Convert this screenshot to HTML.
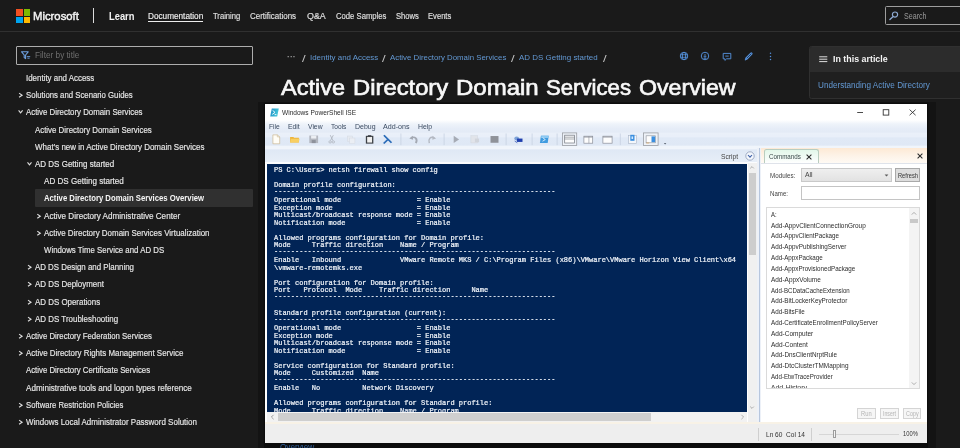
<!DOCTYPE html>
<html lang="en">
<head>
<meta charset="utf-8">
<title>Active Directory Domain Services Overview | Microsoft Learn</title>
<style>
html,body{margin:0;padding:0;}
body{width:960px;height:448px;overflow:hidden;background:#1a1a1a;position:relative;font-family:"Liberation Sans",sans-serif;}
.a{position:absolute;display:block;}
.t{position:absolute;white-space:pre;display:block;transform-origin:0 50%;}
svg{position:absolute;overflow:visible;}
#con{position:absolute;left:267.4px;top:164px;width:480.1px;height:248px;background:#012456;overflow:hidden;}
.c{position:absolute;display:block;left:6.6px;font-family:"Liberation Mono","DejaVu Sans Mono",monospace;font-size:7.01px;line-height:8px;color:#eef2f8;white-space:pre;-webkit-text-stroke:0.22px #eef2f8;}
.d{font-weight:700;-webkit-text-stroke:0;color:#e8eef6;}
</style>
</head>
<body>
<div id="root" style="position:absolute;left:0;top:0;width:960px;height:448px;overflow:hidden;will-change:transform;">
<!-- ===== header ===== -->
<div class="a" style="left:0;top:31px;width:960px;height:1.3px;background:#303030;"></div>
<div class="a" style="left:16px;top:9.2px;width:6.6px;height:6.6px;background:#f25022;"></div>
<div class="a" style="left:23.5px;top:9.2px;width:6.6px;height:6.6px;background:#7fba00;"></div>
<div class="a" style="left:16px;top:16.6px;width:6.6px;height:6.6px;background:#00a4ef;"></div>
<div class="a" style="left:23.5px;top:16.6px;width:6.6px;height:6.6px;background:#ffb900;"></div>
<div class="a" style="left:93.2px;top:8.4px;width:1.1px;height:14.2px;background:#dcdcdc;"></div>
<div class="a" style="left:147.8px;top:21.3px;width:55.2px;height:1px;background:#ececec;"></div>
<!-- search -->
<div class="a" style="left:885px;top:6px;width:90px;height:19px;border:1px solid #9e9e9e;border-radius:1.5px;box-sizing:border-box;"></div>
<svg style="left:889.3px;top:11.2px" width="10" height="10" viewBox="0 0 10 10"><circle cx="6" cy="3.6" r="2.6" fill="none" stroke="#8eaad2" stroke-width="1.2"/><path d="M4.2 5.6 L0.9 8.6" stroke="#8eaad2" stroke-width="1.3" stroke-linecap="round"/></svg>
<!-- filter -->
<div class="a" style="left:16px;top:46px;width:237px;height:19px;border:1px solid #adadad;border-radius:1px;box-sizing:border-box;"></div>
<svg style="left:21px;top:51px" width="10" height="9" viewBox="0 0 10 9"><path d="M0.6 0.8 H7.2 L4.6 4 V7.6 L3.2 6.6 V4 Z" fill="none" stroke="#6ea0e0" stroke-width="1.1" stroke-linejoin="round"/><path d="M5.8 5.6 H9.2 M6.4 7.2 H8.6" stroke="#6ea0e0" stroke-width="0.9"/></svg>

<!-- ===== sidebar ===== -->
<div class="a" style="left:34.6px;top:189.2px;width:218.1px;height:17.6px;background:#303030;border-radius:1px;"></div>
<svg style="left:0;top:0" width="260" height="448" viewBox="0 0 260 448" fill="none" stroke="#dcdcdc" stroke-width="1.15" stroke-linecap="butt" stroke-linejoin="miter">
<path d="M19.1 93.1 L22.1 95.2 L19.1 97.3"/>
<path d="M18.6 110.4 L20.6 112.8 L22.6 110.4"/>
<path d="M27.5 162.4 L29.5 164.8 L31.5 162.4"/>
<path d="M37.3 214.1 L40.3 216.2 L37.3 218.3"/>
<path d="M37.3 231.1 L40.3 233.2 L37.3 235.3"/>
<path d="M28.0 265.1 L31.0 267.2 L28.0 269.3"/>
<path d="M28.0 282.1 L31.0 284.2 L28.0 286.3"/>
<path d="M28.0 300.1 L31.0 302.2 L28.0 304.3"/>
<path d="M28.0 317.1 L31.0 319.2 L28.0 321.3"/>
<path d="M19.1 334.1 L22.1 336.2 L19.1 338.3"/>
<path d="M19.1 351.1 L22.1 353.2 L19.1 355.3"/>
<path d="M19.1 403.1 L22.1 405.2 L19.1 407.3"/>
<path d="M19.1 420.1 L22.1 422.2 L19.1 424.3"/>
</svg>

<!-- ===== action icons ===== -->
<svg style="left:679.2px;top:51.3px" width="10" height="10" viewBox="0 0 10 10" fill="none" stroke="#5490da" stroke-width="0.95"><circle cx="5" cy="5" r="3.75"/><ellipse cx="5" cy="5" rx="1.7" ry="3.75"/><path d="M1.4 3.7 H8.6 M1.4 6.3 H8.6" stroke-width="0.8"/></svg>
<svg style="left:700.3px;top:51.3px" width="10" height="10" viewBox="0 0 10 10" fill="none" stroke="#5490da" stroke-width="0.95"><circle cx="5" cy="5" r="3.75"/><path d="M5 2.9 V6.2 M3.6 4.9 L5 6.4 L6.4 4.9 M3.6 7.3 H6.4" stroke-width="0.85"/></svg>
<svg style="left:721.7px;top:51.6px" width="10" height="10" viewBox="0 0 10 10" fill="none" stroke="#5490da" stroke-width="0.95" stroke-linejoin="round"><path d="M1.2 1.4 H8.8 V6.8 H4.6 L2.9 8.4 V6.8 H1.2 Z"/><path d="M3.3 4.1 H6.7" stroke-width="0.9"/></svg>
<svg style="left:743.6px;top:51.4px" width="10" height="10" viewBox="0 0 10 10" fill="none" stroke-linecap="round"><path d="M2.5 7.5 L7.3 2.7" stroke="#5490da" stroke-width="2.6"/><path d="M3 7 L7 3" stroke="#1f2b3c" stroke-width="0.8"/><path d="M1.3 8.9 L2.2 7.9" stroke="#5490da" stroke-width="1.1"/></svg>
<svg style="left:768.8px;top:52px" width="3" height="9" viewBox="0 0 3 9" fill="#5490da"><circle cx="1.5" cy="1.3" r="0.75"/><circle cx="1.5" cy="4.4" r="0.75"/><circle cx="1.5" cy="7.5" r="0.75"/></svg>

<!-- ===== right rail ===== -->
<div class="a" style="left:809.2px;top:46px;width:160px;height:53px;background:#1f1f1f;border:1px solid #303030;border-radius:2.5px;box-sizing:border-box;overflow:hidden;"><div style="height:25.3px;background:#2c2c2c;"></div></div>
<svg style="left:819.2px;top:56px" width="9" height="7" viewBox="0 0 9 7" stroke="#e8e8e8" stroke-width="0.95"><path d="M0.2 0.8 H8.3 M0.2 3.2 H8.3 M0.2 5.6 H8.3"/></svg>

<!-- ===== PowerShell ISE window ===== -->
<div class="a" style="left:258.4px;top:101.6px;width:677.2px;height:348px;background:#131313;"></div>
<div class="a" style="left:263.6px;top:443px;width:664.4px;height:6px;background:#0c0c0c;"></div>
<div class="a" style="left:264.7px;top:103.7px;width:661.9px;height:339.4px;background:#ffffff;box-shadow:0 0 0 1.2px #0c0c0c;"></div>
<!-- ps icon -->
<svg style="left:270px;top:108px" width="9" height="9" viewBox="0 0 9 9"><defs><linearGradient id="psg" x1="0" y1="0" x2="1" y2="0.3"><stop offset="0" stop-color="#1c8cc6"/><stop offset="1" stop-color="#45c6d8"/></linearGradient></defs><path d="M1.8 0.4 H8.8 L7.2 8.4 H0.2 Z" fill="url(#psg)"/><path d="M2.6 2.4 L5 4.4 L2.2 6.4 M4.6 6.6 H6.4" fill="none" stroke="#fff" stroke-width="0.9"/></svg>
<!-- window controls -->
<svg style="left:850px;top:106px" width="70" height="12" viewBox="0 0 70 12" fill="none" stroke="#2a2a2a" stroke-width="0.85"><path d="M7.2 6.5 H13"/><rect x="33.2" y="3.7" width="5.6" height="5.4"/><path d="M59.6 3.6 L65.6 9.2 M65.6 3.6 L59.6 9.2"/></svg>
<!-- menu / toolbar bands -->
<div class="a" style="left:264.7px;top:120px;width:661.9px;height:43.3px;background:linear-gradient(to bottom,#ffffff 0px,#eef3fa 4px,#e5ecf7 9px,#e4ebf6 12px,#eaf0f9 13.5px,#e9eff9 16.5px,#e0e9f6 18px,#dfe8f5 25px,#f0f5fb 26.5px,#f1f5fb 28.5px,#dfe8f5 30px,#e8eff8 43.3px);"></div>
<div class="a" style="left:264.7px;top:161.8px;width:492.4px;height:2.4px;background:#fbfcfe;"></div>
<!-- commands tab strip (cream) -->
<div class="a" style="left:761.2px;top:148px;width:165.7px;height:15.3px;background:linear-gradient(to bottom,#fde9d4 0,#fdf3e8 8px,#fffaf4 15px);"></div>
<div class="a" style="left:761.2px;top:162.6px;width:165.7px;height:0.9px;background:#dfe3ea;"></div>
<!-- toolbar icons -->
<svg style="left:264.7px;top:131px" width="420" height="17" viewBox="264.7 131 420 17">
<g transform="translate(0 139.4) scale(1 0.84) translate(0 -139.6)">
<!-- new -->
<path d="M272.6 134.2 H277 L279.4 136.6 V144.8 H272.6 Z" fill="#fffdf6" stroke="#c9b48c" stroke-width="0.7"/><path d="M277 134.2 V136.6 H279.4" fill="none" stroke="#c9b48c" stroke-width="0.6"/>
<!-- open -->
<path d="M289.8 136.6 H293 L293.9 137.6 H298.6 V143.4 H289.8 Z" fill="#eeb53c"/><path d="M290.6 138.8 H299.4 L298.3 143.4 H289.8 Z" fill="#f8cf62"/>
<!-- save (disabled) -->
<rect x="309" y="135" width="8.8" height="9" fill="#b3b7c0"/><rect x="310.8" y="135" width="5.2" height="3.6" fill="#eceff4"/><rect x="311.4" y="140.4" width="4" height="3.6" fill="#8e929c"/>
<!-- cut (disabled) -->
<path d="M330 134.6 L332.6 141 M333 134.6 L330.2 141" stroke="#adb2bc" stroke-width="0.9" fill="none"/><circle cx="329.8" cy="142.6" r="1.3" fill="none" stroke="#adb2bc" stroke-width="0.8"/><circle cx="333" cy="142.6" r="1.3" fill="none" stroke="#adb2bc" stroke-width="0.8"/>
<!-- copy (disabled) -->
<rect x="347" y="135.6" width="5.2" height="6.4" fill="#e6eaf1" stroke="#d6dbe4" stroke-width="0.6"/><rect x="349.4" y="138" width="5.2" height="6.4" fill="#eaeef4" stroke="#d6dbe4" stroke-width="0.6"/>
<!-- paste -->
<rect x="366.2" y="136" width="6.2" height="8" fill="#f1f1f1" stroke="#3c4046" stroke-width="1.3"/><rect x="367.6" y="134.6" width="3.4" height="2.2" fill="#3c4046"/>
<!-- clear console (ps) -->
<path d="M383.6 134.8 L391.2 143.6 M387.6 139.6 L383.4 144.4" fill="none" stroke="#2b6cb8" stroke-width="1.8"/>
<!-- sep -->
<path d="M400.6 132.6 V146.4 M443.8 132.6 V146.4 M505.8 132.6 V146.4 M531.8 132.6 V146.4 M556.8 132.6 V146.4 M620 132.6 V146.4" stroke="#c3cede" stroke-width="0.8"/>
<!-- undo / redo -->
<path d="M415.6 144 C417.6 139 415 135.8 410.6 137.6" fill="none" stroke="#a4a9b3" stroke-width="1.9"/><path d="M409 138.4 L412.6 135.4 L412.8 140 Z" fill="#a4a9b3"/>
<path d="M429 144 C427.6 139 430 135.8 434 137.6" fill="none" stroke="#b4b9c3" stroke-width="1.5"/><path d="M435.8 138.4 L432.2 135.4 L432 140 Z" fill="#b4b9c3"/>
<!-- run / run sel / stop -->
<path d="M453.4 135.4 L458.8 139.6 L453.4 143.8 Z" fill="#a6abb5"/>
<rect x="470.6" y="135.2" width="6.4" height="8.6" fill="#e1e4ea" stroke="#cfd4dc" stroke-width="0.5"/><rect x="474.6" y="138.6" width="4.2" height="4.4" fill="#d1d5dc"/>
<rect x="490.2" y="135.6" width="8" height="8" fill="#8f9299"/>
<!-- remote -->
<circle cx="516.4" cy="138.4" r="2.4" fill="#7ea3d8"/><rect x="516.6" y="138.6" width="5.6" height="4" fill="#1f3fae"/><path d="M514.4 141.6 L517 143.6" stroke="#3050b0" stroke-width="0.8"/>
<!-- ps remote -->
<path d="M540.6 135.2 H548.4 L547.4 144 H539.6 Z" fill="#3f9be0"/><path d="M541 135.2 H548.4 L548 138 H540.8 Z" fill="#8cc8f2"/><path d="M542.4 137.6 L545 139.8 L542.2 141.8" fill="none" stroke="#fff" stroke-width="0.8"/>
</g>
<!-- layout 1 (selected) -->
<rect x="562.2" y="132.9" width="14.2" height="12.6" fill="#eef2f8" stroke="#9a9da3" stroke-width="0.8"/>
<rect x="564.4" y="135.2" width="9.8" height="7.8" fill="#fdfdfd" stroke="#70757e" stroke-width="0.7"/><path d="M564.4 137.2 H574.2 M564.4 139 H574.2" stroke="#70757e" stroke-width="0.6"/>
<!-- layout 2 -->
<rect x="583.6" y="136.2" width="8.8" height="7" fill="#fdfdfd" stroke="#8a8f99" stroke-width="0.7"/><path d="M588.6 136.2 V143.2" stroke="#8a8f99" stroke-width="0.6"/><path d="M583.6 137 H592.4" stroke="#8a8f99" stroke-width="0.9"/>
<!-- layout 3 -->
<rect x="602.6" y="136.2" width="9.2" height="7" fill="#fdfdfd" stroke="#8a8f99" stroke-width="0.7"/><path d="M602.6 137 H611.8" stroke="#8a8f99" stroke-width="0.9"/>
<!-- show command -->
<rect x="628.2" y="135.6" width="8" height="8" fill="#f4f7fb" stroke="#a9b4c6" stroke-width="0.6"/><rect x="630" y="134.8" width="4.2" height="6" fill="#3b8fe0"/><rect x="631.2" y="136.4" width="1.6" height="2.6" fill="#d5ebff"/>
<!-- show addon (selected) -->
<rect x="643.2" y="132.9" width="14.6" height="12.6" fill="#eef2f8" stroke="#9a9da3" stroke-width="0.8"/>
<rect x="645.8" y="135.8" width="9.4" height="7" fill="#fdfdfd" stroke="#8a8f99" stroke-width="0.6"/><rect x="651.2" y="136.4" width="3.6" height="5.8" fill="#3b8fe0"/><path d="M646 143 H649" stroke="#e0a050" stroke-width="0.7"/>
<path d="M663.6 143 H666 L664.8 144.6 Z" fill="#5a6270"/>
</svg>
<!-- script toggle button -->
<svg style="left:744.6px;top:151.2px" width="10" height="10" viewBox="0 0 10 10"><circle cx="5" cy="5" r="4.2" fill="#f4f7fc" stroke="#8e9cb8" stroke-width="0.8"/><path d="M3 4 L5 6.2 L7 4" fill="none" stroke="#3b5fa8" stroke-width="1.1"/></svg>
<!-- console -->
<div id="con">
<span class="c" style="top:2px">PS C:\Users&gt; netsh firewall show config</span>
<span class="c" style="top:17px">Domain profile configuration:</span>
<span class="c d" style="top:23px">-------------------------------------------------------------------</span>
<span class="c" style="top:32px">Operational mode                  = Enable</span>
<span class="c" style="top:40px">Exception mode                    = Enable</span>
<span class="c" style="top:47px">Multicast/broadcast response mode = Enable</span>
<span class="c" style="top:55px">Notification mode                 = Enable</span>
<span class="c" style="top:70px">Allowed programs configuration for Domain profile:</span>
<span class="c" style="top:77px">Mode     Traffic direction    Name / Program</span>
<span class="c d" style="top:83px">-------------------------------------------------------------------</span>
<span class="c" style="top:92px">Enable   Inbound              VMware Remote MKS / C:\Program Files (x86)\VMware\VMware Horizon View Client\x64</span>
<span class="c" style="top:100px">\vmware-remotemks.exe</span>
<span class="c" style="top:115px">Port configuration for Domain profile:</span>
<span class="c" style="top:122px">Port   Protocol  Mode    Traffic direction     Name</span>
<span class="c d" style="top:128px">-------------------------------------------------------------------</span>
<span class="c" style="top:145px">Standard profile configuration (current):</span>
<span class="c d" style="top:151px">-------------------------------------------------------------------</span>
<span class="c" style="top:160px">Operational mode                  = Enable</span>
<span class="c" style="top:168px">Exception mode                    = Enable</span>
<span class="c" style="top:175px">Multicast/broadcast response mode = Enable</span>
<span class="c" style="top:183px">Notification mode                 = Enable</span>
<span class="c" style="top:198px">Service configuration for Standard profile:</span>
<span class="c" style="top:205px">Mode     Customized  Name</span>
<span class="c d" style="top:211px">-------------------------------------------------------------------</span>
<span class="c" style="top:220px">Enable   No          Network Discovery</span>
<span class="c" style="top:235px">Allowed programs configuration for Standard profile:</span>
<span class="c" style="top:243px">Mode     Traffic direction    Name / Program</span>
</div>
<!-- console v-scrollbar -->
<div class="a" style="left:747.5px;top:163.3px;width:9.6px;height:259px;background:#f0f0f0;"></div>
<div class="a" style="left:749.2px;top:172.6px;width:6.4px;height:82.6px;background:#cdcdcd;"></div>
<svg style="left:749.4px;top:165px" width="6" height="5" viewBox="0 0 6 5" fill="none" stroke="#9a9a9a" stroke-width="0.8"><path d="M1.2 3.4 L3 1.6 L4.8 3.4"/></svg>
<svg style="left:749.4px;top:404.6px" width="6" height="5" viewBox="0 0 6 5" fill="none" stroke="#9a9a9a" stroke-width="0.8"><path d="M1.2 1.6 L3 3.4 L4.8 1.6"/></svg>
<!-- console h-scrollbar -->
<div class="a" style="left:267.4px;top:412px;width:480.1px;height:10.3px;background:#f2f2f2;"></div>
<div class="a" style="left:277.6px;top:413px;width:373px;height:8.4px;background:#cfcfcf;"></div>
<svg style="left:269.6px;top:414.4px" width="5" height="6" viewBox="0 0 5 6" fill="none" stroke="#8a8a8a" stroke-width="0.8"><path d="M3.6 0.8 L1.4 3 L3.6 5.2"/></svg>
<svg style="left:740px;top:414.4px" width="5" height="6" viewBox="0 0 5 6" fill="none" stroke="#a0a0a0" stroke-width="0.8"><path d="M1.4 0.8 L3.6 3 L1.4 5.2"/></svg>
<!-- splitter -->
<div class="a" style="left:757.1px;top:148px;width:4.1px;height:274.4px;background:#edf1f8;"></div>
<div class="a" style="left:759.2px;top:148px;width:1.1px;height:274.4px;background:#b7c6dd;"></div>
<!-- commands tab -->
<div class="a" style="left:764.4px;top:149.4px;width:54.6px;height:14px;background:linear-gradient(to bottom,#e3f7ea,#f3fbf6 60%,#ffffff);border:0.8px solid #b9cdbf;border-bottom:none;border-radius:2.5px 2.5px 0 0;box-sizing:border-box;"></div>
<svg style="left:805.6px;top:154.2px" width="6" height="6" viewBox="0 0 6 6" fill="none" stroke="#2c2c2c" stroke-width="1.05"><path d="M0.6 0.6 L5.4 5.4 M5.4 0.6 L0.6 5.4"/></svg>
<svg style="left:917.2px;top:153.2px" width="6" height="6" viewBox="0 0 6 6" fill="none" stroke="#2c2c2c" stroke-width="1.05"><path d="M0.6 0.6 L5.4 5.4 M5.4 0.6 L0.6 5.4"/></svg>
<!-- modules combo / refresh / name -->
<div class="a" style="left:801.2px;top:168.2px;width:90.6px;height:14.2px;background:linear-gradient(to bottom,#efefef,#e2e2e2);border:0.8px solid #c9c9c9;box-sizing:border-box;"></div>
<svg style="left:884px;top:174px" width="5" height="3" viewBox="0 0 5 3"><path d="M0.6 0.4 H4.4 L2.5 2.6 Z" fill="#5a5a5a"/></svg>
<div class="a" style="left:895.2px;top:168.2px;width:24.8px;height:14.2px;background:#dddddd;border:0.8px solid #a9a9a9;box-sizing:border-box;"></div>
<div class="a" style="left:801.2px;top:186.4px;width:118.8px;height:14px;background:#fff;border:0.8px solid #c4c4c4;box-sizing:border-box;"></div>
<!-- list box -->
<div class="a" style="left:766.2px;top:207.3px;width:153.8px;height:182px;background:#fff;border:0.8px solid #dadada;box-sizing:border-box;"></div>
<div class="a" style="left:908.8px;top:208.2px;width:10.4px;height:180.2px;background:#f4f4f4;"></div>
<div class="a" style="left:909.8px;top:218.6px;width:8.6px;height:4.6px;background:#c9c9c9;"></div>
<svg style="left:911px;top:211px" width="6" height="5" viewBox="0 0 6 5" fill="none" stroke="#9a9a9a" stroke-width="0.8"><path d="M0.8 3.6 L3 1.4 L5.2 3.6"/></svg>
<svg style="left:911px;top:381.4px" width="6" height="5" viewBox="0 0 6 5" fill="none" stroke="#9a9a9a" stroke-width="0.8"><path d="M0.8 1.4 L3 3.6 L5.2 1.4"/></svg>
<!-- cut-off last list item -->
<div class="a" style="left:767px;top:381.8px;width:140px;height:6.6px;overflow:hidden;"><span style="position:absolute;left:3.75px;top:1.2px;font-size:7.2px;line-height:9px;color:#3c3c3c;white-space:pre;letter-spacing:-0.12px;">Add-History</span></div>
<!-- run/insert/copy -->
<div class="a" style="left:856.5px;top:408px;width:19px;height:11.2px;background:#f6f6f6;border:0.8px solid #d4d4d4;box-sizing:border-box;"></div>
<div class="a" style="left:879.6px;top:408px;width:19.2px;height:11.2px;background:#f6f6f6;border:0.8px solid #d4d4d4;box-sizing:border-box;"></div>
<div class="a" style="left:902.6px;top:408px;width:18.8px;height:11.2px;background:#f6f6f6;border:0.8px solid #d4d4d4;box-sizing:border-box;"></div>
<!-- band under scrollbar + status bar -->
<div class="a" style="left:264.7px;top:422.2px;width:661.9px;height:2.4px;background:#f8f2e6;"></div>
<div class="a" style="left:264.7px;top:424.4px;width:661.9px;height:18.6px;background:#eeeeee;"></div>
<div class="a" style="left:757.6px;top:427.6px;width:0.8px;height:13px;background:#cfcfcf;"></div>
<div class="a" style="left:810.8px;top:427.6px;width:0.8px;height:13px;background:#cfcfcf;"></div>
<div class="a" style="left:818.8px;top:433.8px;width:80px;height:0.9px;background:#d6d6d6;"></div>
<div class="a" style="left:832.8px;top:429.8px;width:3.6px;height:8.6px;background:#f4f4f4;border:0.8px solid #9c9c9c;box-sizing:border-box;"></div>
<!-- peeking link text under the window -->
<div class="a" style="left:279px;top:444.4px;width:40px;height:4px;overflow:hidden;"><span style="position:absolute;left:1px;top:-1.2px;font-size:8.2px;line-height:10px;color:#2f5f9c;white-space:pre;">Overview</span></div>

<!-- ===== all text ===== -->
<span class="t" style="left:33.30px;top:10px;font-size:11.2px;line-height:12px;font-weight:400;color:#f4f4f4;transform:scaleX(1.0112);-webkit-text-stroke:0.42px #f4f4f4;">Microsoft</span>
<span class="t" style="left:108.50px;top:11px;font-size:10.4px;line-height:11px;font-weight:700;color:#f4f4f4;transform:scaleX(0.8976);">Learn</span>
<span class="t" style="left:147.80px;top:11px;font-size:8.3px;line-height:10px;font-weight:400;color:#f0f0f0;transform:scaleX(0.9890);-webkit-text-stroke:0.14px #f0f0f0;">Documentation</span>
<span class="t" style="left:212.80px;top:11px;font-size:8.3px;line-height:10px;font-weight:400;color:#e0e0e0;transform:scaleX(0.9167);-webkit-text-stroke:0.14px #e0e0e0;">Training</span>
<span class="t" style="left:249.70px;top:11px;font-size:8.3px;line-height:10px;font-weight:400;color:#e0e0e0;transform:scaleX(0.9610);-webkit-text-stroke:0.14px #e0e0e0;">Certifications</span>
<span class="t" style="left:307.00px;top:11px;font-size:8.3px;line-height:10px;font-weight:400;color:#e0e0e0;transform:scaleX(1.0724);-webkit-text-stroke:0.14px #e0e0e0;">Q&amp;A</span>
<span class="t" style="left:336.30px;top:11px;font-size:8.3px;line-height:10px;font-weight:400;color:#e0e0e0;transform:scaleX(0.9261);-webkit-text-stroke:0.14px #e0e0e0;">Code Samples</span>
<span class="t" style="left:395.80px;top:11px;font-size:8.3px;line-height:10px;font-weight:400;color:#e0e0e0;transform:scaleX(0.9194);-webkit-text-stroke:0.14px #e0e0e0;">Shows</span>
<span class="t" style="left:428.00px;top:11px;font-size:8.3px;line-height:10px;font-weight:400;color:#e0e0e0;transform:scaleX(0.9182);-webkit-text-stroke:0.14px #e0e0e0;">Events</span>
<span class="t" style="left:904.40px;top:11px;font-size:8.6px;line-height:10px;font-weight:400;color:#9a9a9a;transform:scaleX(0.8262);">Search</span>
<span class="t" style="left:34.80px;top:50px;font-size:8.6px;line-height:10px;font-weight:400;color:#6f6f6f;transform:scaleX(0.9584);">Filter by title</span>
<span class="t" style="left:25.90px;top:73px;font-size:8.3px;line-height:10px;font-weight:400;color:#e6e6e6;transform:scaleX(0.9552);-webkit-text-stroke:0.16px #e6e6e6;">Identity and Access</span>
<span class="t" style="left:25.90px;top:90px;font-size:8.3px;line-height:10px;font-weight:400;color:#e6e6e6;transform:scaleX(0.9365);-webkit-text-stroke:0.16px #e6e6e6;">Solutions and Scenario Guides</span>
<span class="t" style="left:25.90px;top:107px;font-size:8.3px;line-height:10px;font-weight:400;color:#e6e6e6;transform:scaleX(0.9463);-webkit-text-stroke:0.16px #e6e6e6;">Active Directory Domain Services</span>
<span class="t" style="left:34.80px;top:125px;font-size:8.3px;line-height:10px;font-weight:400;color:#e6e6e6;transform:scaleX(0.9487);-webkit-text-stroke:0.16px #e6e6e6;">Active Directory Domain Services</span>
<span class="t" style="left:34.80px;top:142px;font-size:8.3px;line-height:10px;font-weight:400;color:#e6e6e6;transform:scaleX(0.9600);-webkit-text-stroke:0.16px #e6e6e6;">What’s new in Active Directory Domain Services</span>
<span class="t" style="left:34.80px;top:159px;font-size:8.3px;line-height:10px;font-weight:400;color:#e6e6e6;transform:scaleX(0.9648);-webkit-text-stroke:0.16px #e6e6e6;">AD DS Getting started</span>
<span class="t" style="left:44.10px;top:176px;font-size:8.3px;line-height:10px;font-weight:400;color:#e6e6e6;transform:scaleX(0.9721);-webkit-text-stroke:0.16px #e6e6e6;">AD DS Getting started</span>
<span class="t" style="left:44.10px;top:193px;font-size:8.3px;line-height:10px;font-weight:700;color:#f6f6f6;transform:scaleX(0.9307);">Active Directory Domain Services Overview</span>
<span class="t" style="left:44.10px;top:211px;font-size:8.3px;line-height:10px;font-weight:400;color:#e6e6e6;transform:scaleX(0.9774);-webkit-text-stroke:0.16px #e6e6e6;">Active Directory Administrative Center</span>
<span class="t" style="left:44.10px;top:228px;font-size:8.3px;line-height:10px;font-weight:400;color:#e6e6e6;transform:scaleX(0.9579);-webkit-text-stroke:0.16px #e6e6e6;">Active Directory Domain Services Virtualization</span>
<span class="t" style="left:44.10px;top:245px;font-size:8.3px;line-height:10px;font-weight:400;color:#e6e6e6;transform:scaleX(0.9437);-webkit-text-stroke:0.16px #e6e6e6;">Windows Time Service and AD DS</span>
<span class="t" style="left:34.80px;top:262px;font-size:8.3px;line-height:10px;font-weight:400;color:#e6e6e6;transform:scaleX(0.9488);-webkit-text-stroke:0.16px #e6e6e6;">AD DS Design and Planning</span>
<span class="t" style="left:34.80px;top:279px;font-size:8.3px;line-height:10px;font-weight:400;color:#e6e6e6;transform:scaleX(0.9578);-webkit-text-stroke:0.16px #e6e6e6;">AD DS Deployment</span>
<span class="t" style="left:34.80px;top:297px;font-size:8.3px;line-height:10px;font-weight:400;color:#e6e6e6;transform:scaleX(0.9538);-webkit-text-stroke:0.16px #e6e6e6;">AD DS Operations</span>
<span class="t" style="left:34.80px;top:314px;font-size:8.3px;line-height:10px;font-weight:400;color:#e6e6e6;transform:scaleX(0.9583);-webkit-text-stroke:0.16px #e6e6e6;">AD DS Troubleshooting</span>
<span class="t" style="left:25.90px;top:331px;font-size:8.3px;line-height:10px;font-weight:400;color:#e6e6e6;transform:scaleX(0.9390);-webkit-text-stroke:0.16px #e6e6e6;">Active Directory Federation Services</span>
<span class="t" style="left:25.90px;top:348px;font-size:8.3px;line-height:10px;font-weight:400;color:#e6e6e6;transform:scaleX(0.9555);-webkit-text-stroke:0.16px #e6e6e6;">Active Directory Rights Management Service</span>
<span class="t" style="left:25.90px;top:365px;font-size:8.3px;line-height:10px;font-weight:400;color:#e6e6e6;transform:scaleX(0.9410);-webkit-text-stroke:0.16px #e6e6e6;">Active Directory Certificate Services</span>
<span class="t" style="left:25.90px;top:383px;font-size:8.3px;line-height:10px;font-weight:400;color:#e6e6e6;transform:scaleX(0.9742);-webkit-text-stroke:0.16px #e6e6e6;">Administrative tools and logon types reference</span>
<span class="t" style="left:25.90px;top:400px;font-size:8.3px;line-height:10px;font-weight:400;color:#e6e6e6;transform:scaleX(0.9264);-webkit-text-stroke:0.16px #e6e6e6;">Software Restriction Policies</span>
<span class="t" style="left:25.90px;top:417px;font-size:8.3px;line-height:10px;font-weight:400;color:#e6e6e6;transform:scaleX(0.9631);-webkit-text-stroke:0.16px #e6e6e6;">Windows Local Administrator Password Solution</span>
<span class="t" style="left:286.70px;top:52px;font-size:9px;line-height:10px;font-weight:700;color:#9a9a9a;transform:scaleX(0.9667);">···</span>
<span class="t" style="left:301.80px;top:53px;font-size:9.6px;line-height:11px;font-weight:400;color:#c4c4c4;transform:scaleX(1.3474);">/</span>
<span class="t" style="left:310.00px;top:53px;font-size:8.1px;line-height:9px;font-weight:400;color:#6399d4;transform:scaleX(0.9792);">Identity and Access</span>
<span class="t" style="left:382.20px;top:53px;font-size:9.6px;line-height:11px;font-weight:400;color:#c4c4c4;transform:scaleX(1.3474);">/</span>
<span class="t" style="left:390.20px;top:53px;font-size:8.1px;line-height:9px;font-weight:400;color:#6399d4;transform:scaleX(0.9684);">Active Directory Domain Services</span>
<span class="t" style="left:511.20px;top:53px;font-size:9.6px;line-height:11px;font-weight:400;color:#c4c4c4;transform:scaleX(1.3474);">/</span>
<span class="t" style="left:519.00px;top:53px;font-size:8.1px;line-height:9px;font-weight:400;color:#6399d4;transform:scaleX(0.9828);">AD DS Getting started</span>
<span class="t" style="left:603.00px;top:53px;font-size:9.6px;line-height:11px;font-weight:400;color:#c4c4c4;transform:scaleX(1.3474);">/</span>
<span class="t" style="left:281.00px;top:76px;font-size:21.3px;line-height:24px;font-weight:400;color:#f8f8f8;transform:scaleX(1.1034);-webkit-text-stroke:0.64px #f8f8f8;">Active</span>
<span class="t" style="left:353.00px;top:76px;font-size:21.3px;line-height:24px;font-weight:400;color:#f8f8f8;transform:scaleX(1.1173);-webkit-text-stroke:0.64px #f8f8f8;">Directory</span>
<span class="t" style="left:456.00px;top:76px;font-size:21.3px;line-height:24px;font-weight:400;color:#f8f8f8;transform:scaleX(1.1268);-webkit-text-stroke:0.64px #f8f8f8;">Domain</span>
<span class="t" style="left:546.10px;top:76px;font-size:21.3px;line-height:24px;font-weight:400;color:#f8f8f8;transform:scaleX(1.0407);-webkit-text-stroke:0.64px #f8f8f8;">Services</span>
<span class="t" style="left:638.60px;top:76px;font-size:21.3px;line-height:24px;font-weight:400;color:#f8f8f8;transform:scaleX(1.0883);-webkit-text-stroke:0.64px #f8f8f8;">Overview</span>
<span class="t" style="left:832.80px;top:53px;font-size:9.4px;line-height:11px;font-weight:700;color:#f4f4f4;transform:scaleX(0.9457);">In this article</span>
<span class="t" style="left:818.30px;top:80px;font-size:8.3px;line-height:10px;font-weight:400;color:#6399d4;transform:scaleX(0.9806);">Understanding Active Directory</span>
<span class="t" style="left:282.20px;top:108px;font-size:8.1px;line-height:9px;font-weight:400;color:#2a2a2a;transform:scaleX(0.8114);">Windows PowerShell ISE</span>
<span class="t" style="left:268.70px;top:122px;font-size:7.4px;line-height:9px;font-weight:400;color:#3a4a60;transform:scaleX(0.9059);">File</span>
<span class="t" style="left:287.50px;top:122px;font-size:7.4px;line-height:9px;font-weight:400;color:#3a4a60;transform:scaleX(0.9176);">Edit</span>
<span class="t" style="left:307.50px;top:122px;font-size:7.4px;line-height:9px;font-weight:400;color:#3a4a60;transform:scaleX(0.9125);">View</span>
<span class="t" style="left:330.80px;top:122px;font-size:7.4px;line-height:9px;font-weight:400;color:#3a4a60;transform:scaleX(0.8919);">Tools</span>
<span class="t" style="left:354.50px;top:122px;font-size:7.4px;line-height:9px;font-weight:400;color:#3a4a60;transform:scaleX(0.9412);">Debug</span>
<span class="t" style="left:383.00px;top:122px;font-size:7.4px;line-height:9px;font-weight:400;color:#3a4a60;transform:scaleX(0.9625);">Add-ons</span>
<span class="t" style="left:417.80px;top:122px;font-size:7.4px;line-height:9px;font-weight:400;color:#3a4a60;transform:scaleX(0.9340);">Help</span>
<span class="t" style="left:720.90px;top:152px;font-size:7.4px;line-height:9px;font-weight:400;color:#444;transform:scaleX(0.9045);">Script</span>
<span class="t" style="left:769.20px;top:152px;font-size:7.2px;line-height:9px;font-weight:400;color:#3a4a4a;transform:scaleX(0.8680);">Commands</span>
<span class="t" style="left:769.50px;top:171px;font-size:7.3px;line-height:9px;font-weight:400;color:#444;transform:scaleX(0.8545);">Modules:</span>
<span class="t" style="left:805.00px;top:170px;font-size:7.3px;line-height:9px;font-weight:400;color:#444;transform:scaleX(0.9372);">All</span>
<span class="t" style="left:897.60px;top:172px;font-size:7.0px;line-height:7px;font-weight:400;color:#333;transform:scaleX(0.8158);">Refresh</span>
<span class="t" style="left:769.50px;top:189px;font-size:7.3px;line-height:9px;font-weight:400;color:#444;transform:scaleX(0.8372);">Name:</span>
<span class="t" style="left:770.75px;top:210px;font-size:7.2px;line-height:9px;font-weight:400;color:#2c2c2c;transform:scaleX(0.8239);">A:</span>
<span class="t" style="left:770.75px;top:221px;font-size:7.2px;line-height:9px;font-weight:400;color:#2c2c2c;transform:scaleX(0.8915);">Add-AppvClientConnectionGroup</span>
<span class="t" style="left:770.75px;top:231px;font-size:7.2px;line-height:9px;font-weight:400;color:#2c2c2c;transform:scaleX(0.8727);">Add-AppvClientPackage</span>
<span class="t" style="left:770.75px;top:242px;font-size:7.2px;line-height:9px;font-weight:400;color:#2c2c2c;transform:scaleX(0.8783);">Add-AppvPublishingServer</span>
<span class="t" style="left:770.75px;top:253px;font-size:7.2px;line-height:9px;font-weight:400;color:#2c2c2c;transform:scaleX(0.8691);">Add-AppxPackage</span>
<span class="t" style="left:770.75px;top:264px;font-size:7.2px;line-height:9px;font-weight:400;color:#2c2c2c;transform:scaleX(0.8677);">Add-AppxProvisionedPackage</span>
<span class="t" style="left:770.75px;top:275px;font-size:7.2px;line-height:9px;font-weight:400;color:#2c2c2c;transform:scaleX(0.8956);">Add-AppxVolume</span>
<span class="t" style="left:770.75px;top:286px;font-size:7.2px;line-height:9px;font-weight:400;color:#2c2c2c;transform:scaleX(0.8495);">Add-BCDataCacheExtension</span>
<span class="t" style="left:770.75px;top:296px;font-size:7.2px;line-height:9px;font-weight:400;color:#2c2c2c;transform:scaleX(0.8794);">Add-BitLockerKeyProtector</span>
<span class="t" style="left:770.75px;top:307px;font-size:7.2px;line-height:9px;font-weight:400;color:#2c2c2c;transform:scaleX(0.8710);">Add-BitsFile</span>
<span class="t" style="left:770.75px;top:318px;font-size:7.2px;line-height:9px;font-weight:400;color:#2c2c2c;transform:scaleX(0.8733);">Add-CertificateEnrollmentPolicyServer</span>
<span class="t" style="left:770.75px;top:329px;font-size:7.2px;line-height:9px;font-weight:400;color:#2c2c2c;transform:scaleX(0.9037);">Add-Computer</span>
<span class="t" style="left:770.75px;top:340px;font-size:7.2px;line-height:9px;font-weight:400;color:#2c2c2c;transform:scaleX(0.9106);">Add-Content</span>
<span class="t" style="left:770.75px;top:350px;font-size:7.2px;line-height:9px;font-weight:400;color:#2c2c2c;transform:scaleX(0.8835);">Add-DnsClientNrptRule</span>
<span class="t" style="left:770.75px;top:361px;font-size:7.2px;line-height:9px;font-weight:400;color:#2c2c2c;transform:scaleX(0.8940);">Add-DtcClusterTMMapping</span>
<span class="t" style="left:770.75px;top:372px;font-size:7.2px;line-height:9px;font-weight:400;color:#2c2c2c;transform:scaleX(0.8571);">Add-EtwTraceProvider</span>
<span class="t" style="left:860.60px;top:410px;font-size:7.0px;line-height:7px;font-weight:400;color:#b4b4b4;transform:scaleX(0.8253);">Run</span>
<span class="t" style="left:882.60px;top:410px;font-size:7.0px;line-height:7px;font-weight:400;color:#b4b4b4;transform:scaleX(0.7422);">Insert</span>
<span class="t" style="left:905.60px;top:410px;font-size:7.0px;line-height:7px;font-weight:400;color:#b4b4b4;transform:scaleX(0.7709);">Copy</span>
<span class="t" style="left:765.50px;top:430px;font-size:7.3px;line-height:9px;font-weight:400;color:#333;transform:scaleX(0.8982);">Ln 60  Col 14</span>
<span class="t" style="left:903.20px;top:430px;font-size:7.0px;line-height:7px;font-weight:400;color:#333;transform:scaleX(0.8265);">100%</span>
</div>
</body>
</html>
